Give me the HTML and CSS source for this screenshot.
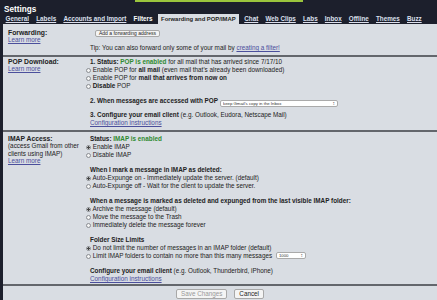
FILE: index.html
```html
<!DOCTYPE html>
<html lang="en">
<head>
    <meta charset="UTF-8">
    <title>Settings - Forwarding and POP/IMAP</title>
    <link rel="stylesheet" href="styles.css">
</head>
<body>

    <div class="strip"></div>
    <h1 class="title">Settings</h1>

    <div class="tabs">
        <a href="#">General</a>
        <a href="#">Labels</a>
        <a href="#">Accounts and Import</a>
        <a href="#" class="plain">Filters</a>
        <span class="active">Forwarding and POP/IMAP</span>
        <a href="#">Chat</a>
        <a href="#">Web Clips</a>
        <a href="#">Labs</a>
        <a href="#">Inbox</a>
        <a href="#">Offline</a>
        <a href="#">Themes</a>
        <a href="#">Buzz</a>
    </div>

    <div class="panel">

        <!-- Forwarding -->
        <div class="section fwd">
            <div class="label">
                <b>Forwarding:</b>
                <a href="#">Learn more</a>
            </div>
            <div class="body">
                <button class="small-btn">Add a forwarding address</button>
                <p class="tip">Tip: You can also forward only some of your mail by <a href="#">creating a filter!</a></p>
            </div>
        </div>

        <!-- POP -->
        <div class="section pop">
            <div class="label">
                <b>POP Download:</b>
                <a href="#">Learn more</a>
            </div>
            <div class="body">
                <div class="group">
                    <p><b>1. Status: <span class="ok">POP is enabled</span></b> for all mail that has arrived since 7/17/10</p>
                    <label><input type="radio" name="pop"> Enable POP for <b>all mail</b> (even mail that's already been downloaded)</label>
                    <label><input type="radio" name="pop"> Enable POP for <b>mail that arrives from now on</b></label>
                    <label><input type="radio" name="pop"> <b>Disable</b> POP</label>
                </div>
                <div class="group pop2">
                    <p><b>2. When messages are accessed with POP</b>
                        <span class="sel wide"><select><option>keep Gmail's copy in the Inbox</option></select></span>
                    </p>
                </div>
                <div class="group">
                    <p><b>3. Configure your email client</b> (e.g. Outlook, Eudora, Netscape Mail)</p>
                    <a href="#">Configuration instructions</a>
                </div>
            </div>
        </div>

        <!-- IMAP -->
        <div class="section imap">
            <div class="label">
                <b>IMAP Access:</b>
                <span>(access Gmail from other clients using IMAP)</span>
                <a href="#">Learn more</a>
            </div>
            <div class="body">
                <div class="group">
                    <p><b>Status: <span class="ok">IMAP is enabled</span></b></p>
                    <label><input type="radio" name="imap" checked> Enable IMAP</label>
                    <label><input type="radio" name="imap"> Disable IMAP</label>
                </div>
                <div class="group">
                    <p><b>When I mark a message in IMAP as deleted:</b></p>
                    <label><input type="radio" name="exp" checked> Auto-Expunge on - Immediately update the server. (default)</label>
                    <label><input type="radio" name="exp"> Auto-Expunge off - Wait for the client to update the server.</label>
                </div>
                <div class="group">
                    <p><b>When a message is marked as deleted and expunged from the last visible IMAP folder:</b></p>
                    <label><input type="radio" name="del" checked> Archive the message (default)</label>
                    <label><input type="radio" name="del"> Move the message to the Trash</label>
                    <label><input type="radio" name="del"> Immediately delete the message forever</label>
                </div>
                <div class="group">
                    <p><b>Folder Size Limits</b></p>
                    <label><input type="radio" name="lim" checked> Do not limit the number of messages in an IMAP folder (default)</label>
                    <label><input type="radio" name="lim"> Limit IMAP folders to contain no more than this many messages
                        <span class="sel num"><select><option>1000</option></select></span>
                    </label>
                </div>
                <div class="group">
                    <p><b>Configure your email client</b> (e.g. Outlook, Thunderbird, iPhone)</p>
                    <a href="#">Configuration instructions</a>
                </div>
            </div>
        </div>

        <div class="actions">
            <button class="small-btn" disabled>Save Changes</button>
            <button class="small-btn">Cancel</button>
        </div>

    </div>

</body>
</html>
```

FILE: styles.css
```css
body {
    font-family: "Liberation Sans", Arial, sans-serif;
    font-size: 6.35px;
    line-height: 8px;
    background: #1c1f2c;
    color: #222;
    margin: 0;
    padding: 0;
    overflow: hidden;
}
a {
    color: #4b4f9c;
}
.strip {
    margin-left: 135px;
    width: 168px;
    height: 2px;
    background: #9bc53d;
}
.title {
    margin: 0;
    padding: 3px 0 0 4px;
    height: 9px;
    font-size: 8.2px;
    line-height: 10px;
    color: #fff;
}
.tabs {
    display: flex;
    align-items: flex-end;
    height: 10px;
    padding-left: 2px;
    white-space: nowrap;
}
.tabs a, .tabs span {
    font-weight: bold;
    font-size: 6.3px;
    line-height: 8px;
    padding: 1px 3.6px;
    color: #dde0ee;
}
.tabs .plain {
    color: #fff;
    text-decoration: none;
}
.tabs .active {
    background: #d9dde3;
    color: #222;
    font-size: 5.9px;
    padding: 1px 3px;
    margin: 0 2px;
}
.panel {
    margin-left: 3px;
    background: #d9dde3;
    height: 276px;
}
.section {
    display: grid;
    grid-template-columns: 82px 1fr;
    padding: 1px 0 3px 5px;
    border-bottom: 2px solid #63666c;
}
.fwd {
    padding-top: 5px;
}
.imap {
    padding: 3px 0 1px 5px;
}
.label {
    display: flex;
    flex-direction: column;
    padding-top: 1px;
    line-height: 7.5px;
}
.label b {
    font-size: 6.8px;
    line-height: 6px;
}
.label span {
    width: 75px;
}
.body p {
    margin: 0;
    white-space: nowrap;
}
.body label {
    display: block;
    height: 8px;
    white-space: nowrap;
}
.group {
    display: flex;
    flex-direction: column;
    margin-bottom: 7px;
}
.group:last-child {
    margin-bottom: 0;
}
.pop2 {
    margin: 5px 0 6px;
}
.pop2 p {
    display: flex;
    height: 8px;
}
.ok {
    color: #2f8a2f;
}
input[type=radio] {
    appearance: none;
    display: inline-block;
    box-sizing: border-box;
    width: 5px;
    height: 5px;
    margin: 0 0 0 -4px;
    border: 1px solid #8a8d92;
    border-radius: 50%;
    background: #f4f4f4;
    vertical-align: -1px;
}
input[type=radio]:checked {
    background: radial-gradient(circle, #444 0 1px, #f4f4f4 1.4px);
}
.small-btn {
    font-family: "Liberation Sans", Arial, sans-serif;
    font-size: 5px;
    line-height: 5px;
    padding: 0 3px;
    background: #f4f4f4;
    border: 1px solid #a8a8a8;
    border-radius: 2px;
    color: #222;
}
.fwd .body {
    display: flex;
    flex-direction: column;
    align-items: flex-start;
}
.fwd .small-btn {
    margin: 1px 0 0 5px;
    height: 7px;
}
.tip {
    margin-top: 7px !important;
}
.sel {
    display: inline-block;
    position: relative;
    height: 7px;
    margin-left: 2px;
    vertical-align: top;
}
.sel select {
    appearance: none;
    box-sizing: border-box;
    width: 100%;
    height: 7px;
    font-family: "Liberation Sans", Arial, sans-serif;
    font-size: 4.3px;
    line-height: 5px;
    padding: 0 2px;
    border: 1px solid #aaa;
    border-radius: 2px;
    background: #fff;
    color: #333;
    display: block;
}
.sel::after {
    content: "\2195";
    position: absolute;
    right: 3px;
    top: 0;
    font-size: 5px;
    line-height: 7px;
    color: #555;
}
.wide {
    width: 118px;
    margin-top: 3px;
}
.num {
    width: 30px;
}
.actions {
    display: flex;
    justify-content: center;
    gap: 7px;
    padding-top: 3px;
}
.actions .small-btn {
    font-size: 6.3px;
    height: 10px;
    line-height: 8px;
    padding: 0 4px;
}
.actions .small-btn:disabled {
    color: #999;
}
```
